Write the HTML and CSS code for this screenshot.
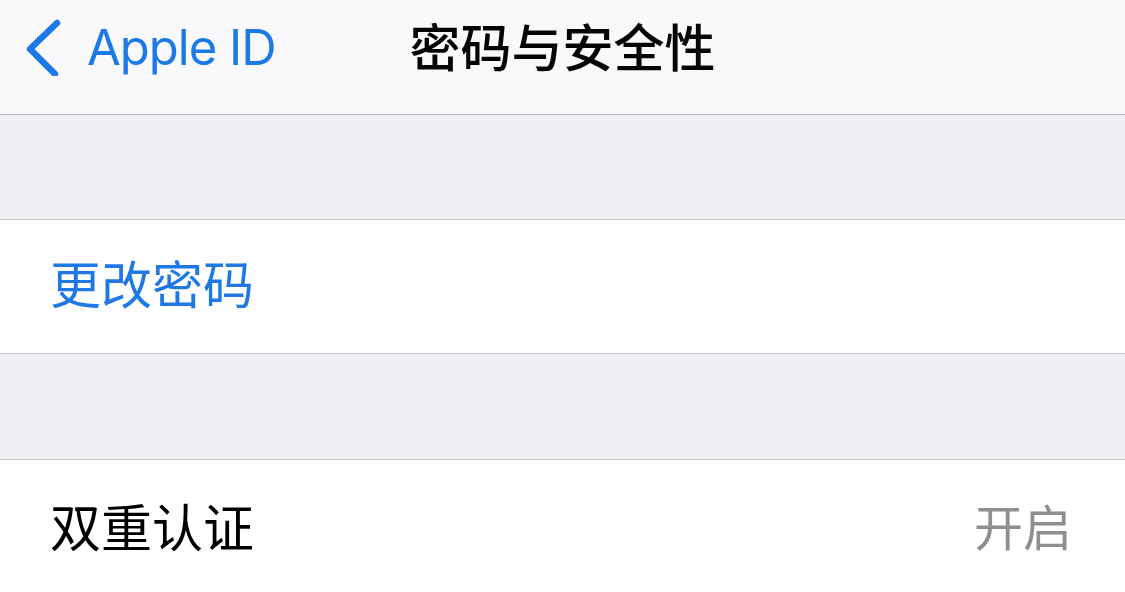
FILE: index.html
```html
<!DOCTYPE html>
<html lang="zh-CN">
<head>
  <meta charset="UTF-8" />
  <meta name="viewport" content="width=device-width, initial-scale=1.0"/>
  <title>密码与安全性</title>
  <link rel="stylesheet" href="styles.css">
</head>
<body>
  <header class="navbar">
    <a class="back" href="#">
      <svg class="chevron" width="40" height="60" viewBox="0 0 40 60">
        <polyline points="33,7 6,33 31,58" fill="none" stroke="currentColor" stroke-width="6.5" stroke-linecap="round" stroke-linejoin="round"/>
      </svg>
      <span class="back-label">Apple ID</span>
    </a>
    <h1 class="title">密码与安全性</h1>
  </header>

  <div class="spacer"></div>

  <ul class="group">
    <li class="cell">
      <span class="cell-label link">更改密码</span>
    </li>
  </ul>

  <div class="spacer spacer-lg"></div>

  <ul class="group">
    <li class="cell cell-detail">
      <span class="cell-label">双重认证</span>
      <span class="cell-value">开启</span>
    </li>
  </ul>
</body>
</html>
```

FILE: styles.css
```css
* {
  margin: 0;
  padding: 0;
  box-sizing: border-box;
}

body {
  font-family: Inter, "Noto Sans CJK SC", sans-serif;
  background: #efeff4;
  color: #000;
  overflow: hidden;
}

.navbar {
  position: relative;
  height: 115px;
  background: #f9f9fb;
  border-bottom: 1px solid #b4b4b8;
  display: flex;
  align-items: center;
  justify-content: center;
}

.back {
  position: absolute;
  left: 24px;
  top: 16px;
  display: flex;
  align-items: flex-start;
  color: #1c7ae6;
  text-decoration: none;
}

.chevron {
  display: block;
}

.back-label {
  font-size: 49px;
  line-height: 60px;
  margin-left: 23px;
  margin-top: 2px;
  letter-spacing: -1px;
}

.title {
  font-family: "Noto Sans CJK SC", sans-serif;
  font-size: 51px;
  font-weight: 500;
  margin-top: -24px;
  color: #050505;
}

.spacer {
  height: 104px;
}

.spacer-lg {
  height: 105px;
}

.group {
  list-style: none;
  background: #fff;
  border-top: 1px solid #c9c8cd;
  border-bottom: 1px solid #c9c8cd;
}

.cell {
  height: 133px;
  padding: 0 53px 10px 50px;
  display: flex;
  align-items: center;
  justify-content: space-between;
  font-family: "Noto Sans CJK SC", sans-serif;
  font-size: 51px;
}

.cell-detail {
  padding-bottom: 4px;
}

.cell-label.link {
  color: #1f78e3;
}

.cell-value {
  color: #8e8e93;
  font-size: 49px;
}
```
